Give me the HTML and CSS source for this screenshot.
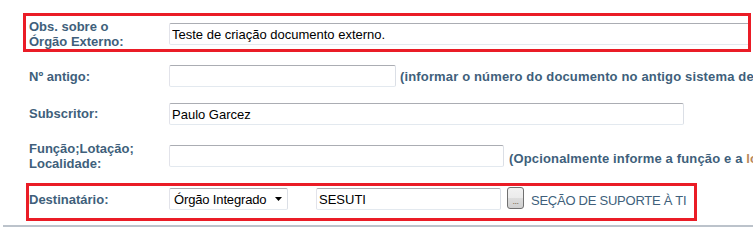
FILE: index.html
```html
<!DOCTYPE html>
<html>
<head>
<meta charset="utf-8">
<link rel="stylesheet" href="styles.css">
</head>
<body>
<div class="form">
  <div class="row hl hl-1">
    <div class="label lab-1">Obs. sobre o<br>Órgão Externo:</div>
    <input class="field f-obs" type="text" value="Teste de criação documento externo.">
  </div>
  <div class="row plain row-2">
    <div class="label lab-2">Nº antigo:</div>
    <input class="field f-antigo" type="text" value="">
    <div class="hint hint-2">(informar o número do documento no antigo sistema de controle)</div>
  </div>
  <div class="row plain row-3">
    <div class="label lab-3">Subscritor:</div>
    <input class="field f-sub" type="text" value="Paulo Garcez">
  </div>
  <div class="row plain row-4">
    <div class="label lab-4">Função;Lotação;<br>Localidade:</div>
    <input class="field f-func" type="text" value="">
    <div class="hint hint-4">(Opcionalmente informe a função e a <span class="alt">lotação</span>)</div>
  </div>
  <div class="row hl hl-2">
    <div class="label lab-5">Destinatário:</div>
    <div class="select">
      <span>Órgão Integrado</span>
      <svg class="arrow" width="7" height="4" viewBox="0 0 7 4"><path d="M0 0H7L3.5 4Z" fill="#000"/></svg>
    </div>
    <input class="field f-sigla" type="text" value="SESUTI">
    <div class="btn"><span>...</span></div>
    <div class="desc">SEÇÃO DE SUPORTE À TI</div>
  </div>
  <div class="rule"></div>
</div>
</body>
</html>
```
FILE: styles.css
```css
html, body {
  margin: 0;
  padding: 0;
  background: #fff;
  overflow: hidden;
}
body {
  width: 753px;
  height: 227px;
  font-family: "Liberation Sans", Arial, sans-serif;
  font-size: 13px;
}
.form {
  padding-top: 13px;
  width: 753px;
  overflow: hidden;
}
.row {
  display: flex;
  align-items: flex-start;
  white-space: nowrap;
  box-sizing: border-box;
}
.plain {
  margin-left: 29px;
  width: 724px;
  overflow: hidden;
}
.label {
  width: 140px;
  flex: none;
  font-weight: bold;
  color: #405f7b;
  line-height: 15px;
}
.hint {
  font-weight: bold;
  color: #405f7b;
  line-height: 15px;
  margin-left: 4px;
  letter-spacing: 0.15px;
}
.hint .alt {
  color: #b9875a;
}
.field {
  flex: none;
  box-sizing: border-box;
  height: 22px;
  margin: 0;
  padding: 0 2px;
  border: 1px solid;
  border-color: #abadb3 #dbdfe6 #e3e9ef #e2e3ea;
  border-radius: 2px;
  font-family: "Liberation Sans", Arial, sans-serif;
  font-size: 13px;
  color: #000;
  background: #fff;
  outline: none;
}
.hl {
  border: 3px solid #ea1c26;
  overflow: hidden;
}
.hl-1 {
  margin-left: 23px;
  width: 728px;
  height: 39px;
  padding-left: 3px;
}
.lab-1 { margin-top: 3px; }
.f-obs { margin-top: 7px; width: 600px; }

.row-2 { height: 38px; }
.lab-2 { margin-top: 17px; }
.f-antigo { margin-top: 13px; width: 227px; }
.hint-2 { margin-top: 17px; }

.row-3 { height: 38px; }
.lab-3 { margin-top: 16px; }
.f-sub { margin-top: 13px; width: 515px; }

.row-4 { height: 55px; }
.lab-4 { margin-top: 13px; }
.f-func { margin-top: 17px; width: 335px; }
.hint-4 { margin-top: 23px; margin-left: 5px; }

.hl-2 {
  margin-left: 26px;
  width: 671px;
  height: 38px;
}
.lab-5 { margin-top: 6px; }
.select {
  flex: none;
  box-sizing: border-box;
  margin-top: 2px;
  width: 119px;
  height: 22px;
  border: 1px solid;
  border-color: #abadb3 #dbdfe6 #e3e9ef #e2e3ea;
  border-radius: 2px;
  display: flex;
  align-items: center;
  justify-content: space-between;
  padding: 0 5px 0 4px;
  color: #000;
  line-height: 15px;
  letter-spacing: -0.15px;
}
.select .arrow { display: block; flex: none; }
.f-sigla { margin-top: 2px; margin-left: 28px; width: 185px; }
.btn {
  flex: none;
  box-sizing: border-box;
  margin-top: 1px;
  margin-left: 6px;
  width: 17px;
  height: 22px;
  border: 1px solid #707070;
  border-radius: 3px;
  background: linear-gradient(#f2f2f2 0%, #ebebeb 50%, #dddddd 51%, #cfcfcf 100%);
  font-size: 9px;
  color: #7a6a50;
  text-align: center;
  line-height: 26px;
  letter-spacing: -0.5px;
}
.desc {
  margin-top: 7px;
  margin-left: 7px;
  color: #405f7b;
  line-height: 15px;
  letter-spacing: -0.25px;
}
.rule {
  margin-top: 4px;
  margin-left: 3px;
  height: 2px;
  background: #bcc3cb;
}
```
